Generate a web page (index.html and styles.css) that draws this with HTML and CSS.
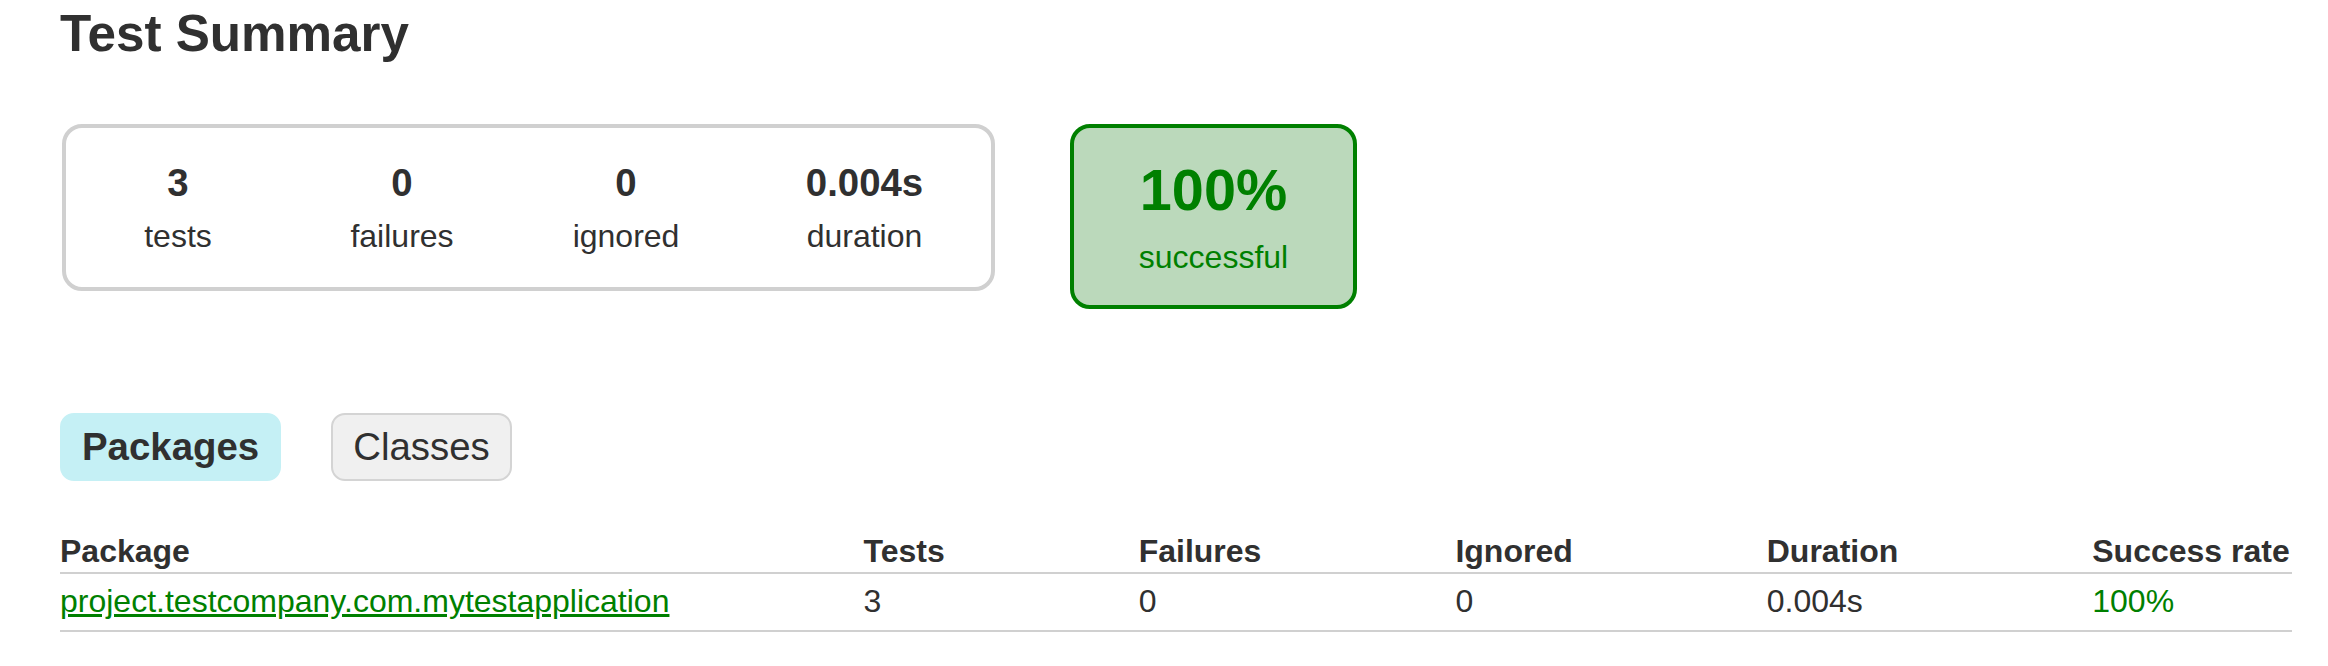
FILE: index.html
```html
<!DOCTYPE html>
<html>
<head>
<meta charset="utf-8">
<title>Test results - Test Summary</title>
<link rel="stylesheet" href="styles.css">
</head>
<body>
<div class="content">
  <h1 class="title">Test Summary</h1>
  <div class="summary">
    <div class="summary-group">
      <div class="info-box">
        <div class="counter">3</div>
        <p class="label">tests</p>
      </div>
      <div class="info-box">
        <div class="counter">0</div>
        <p class="label">failures</p>
      </div>
      <div class="info-box">
        <div class="counter">0</div>
        <p class="label">ignored</p>
      </div>
      <div class="info-box duration">
        <div class="counter">0.004s</div>
        <p class="label">duration</p>
      </div>
    </div>
    <div class="success-rate">
      <div class="percent">100%</div>
      <p class="label">successful</p>
    </div>
  </div>
  <ul class="tab-links">
    <li class="tab selected"><a class="tab-link" href="#tab0">Packages</a></li>
    <li class="tab"><a class="tab-link" href="#tab1">Classes</a></li>
  </ul>
  <table class="results">
    <thead>
      <tr>
        <th>Package</th>
        <th>Tests</th>
        <th>Failures</th>
        <th>Ignored</th>
        <th>Duration</th>
        <th>Success rate</th>
      </tr>
    </thead>
    <tbody>
      <tr>
        <td class="success"><a class="pkg-link" href="#">project.testcompany.com.mytestapplication</a></td>
        <td>3</td>
        <td>0</td>
        <td>0</td>
        <td>0.004s</td>
        <td class="success">100%</td>
      </tr>
    </tbody>
  </table>
</div>
</body>
</html>
```

FILE: styles.css
```css
html, body {
  margin: 0;
  padding: 0;
  background: #ffffff;
}

body {
  font-family: "Liberation Sans", Arial, Helvetica, sans-serif;
  font-size: 32px;
  color: #303030;
}

.content {
  padding: 4px 0 0 60px;
}

.title {
  margin: 0;
  font-size: 51.2px;
  line-height: 59px;
  font-weight: bold;
  white-space: nowrap;
}

.summary {
  margin-top: 61px;
  margin-left: 2px;
  display: flex;
  align-items: flex-start;
}

.summary-group {
  display: flex;
  border: 4px solid #d0d0d0;
  border-radius: 20px;
}

.info-box {
  width: 224px;
  padding: 33px 0 32px;
  text-align: center;
}

.info-box.duration {
  width: 253px;
}

.counter {
  font-size: 38.4px;
  line-height: 44px;
  font-weight: bold;
  margin-bottom: 13px;
}

.label {
  margin: 0;
  line-height: 37px;
}

.success-rate {
  width: 279px;
  margin-left: 75px;
  padding: 29px 0 29px;
  text-align: center;
  border: 4px solid #008000;
  border-radius: 20px;
  background-color: #bbd9bb;
  color: #008000;
}

.percent {
  font-size: 57.6px;
  line-height: 66px;
  font-weight: bold;
  margin-bottom: 16px;
}

.tab-links {
  display: flex;
  gap: 50px;
  list-style: none;
  margin: 104px 0 51px;
  padding: 0;
}

.tab {
  padding: 10px 20px;
  border: 2px solid #d4d4d4;
  border-radius: 14px;
  background-color: #f0f0f0;
}

.tab.selected {
  background-color: #c5f0f5;
  border-color: #c5f0f5;
}

.tab-link {
  display: block;
  font-size: 38.4px;
  line-height: 44px;
  color: #303030;
  text-decoration: none;
}

.tab.selected .tab-link {
  font-weight: bold;
}

.results {
  border-collapse: collapse;
  border-bottom: 2px solid #d0d0d0;
}

.results th {
  text-align: left;
  white-space: nowrap;
  font-weight: bold;
  line-height: 37px;
  padding: 1px 2px 2px 192px;
  border-bottom: 2px solid #d0d0d0;
}

.results td {
  white-space: nowrap;
  line-height: 37px;
  padding: 9px 2px 10px 192px;
}

.results th:first-child,
.results td:first-child {
  padding-left: 0;
}

.results .success,
.results .success a {
  color: #008000;
}

.pkg-link {
  text-decoration: underline;
}
```
